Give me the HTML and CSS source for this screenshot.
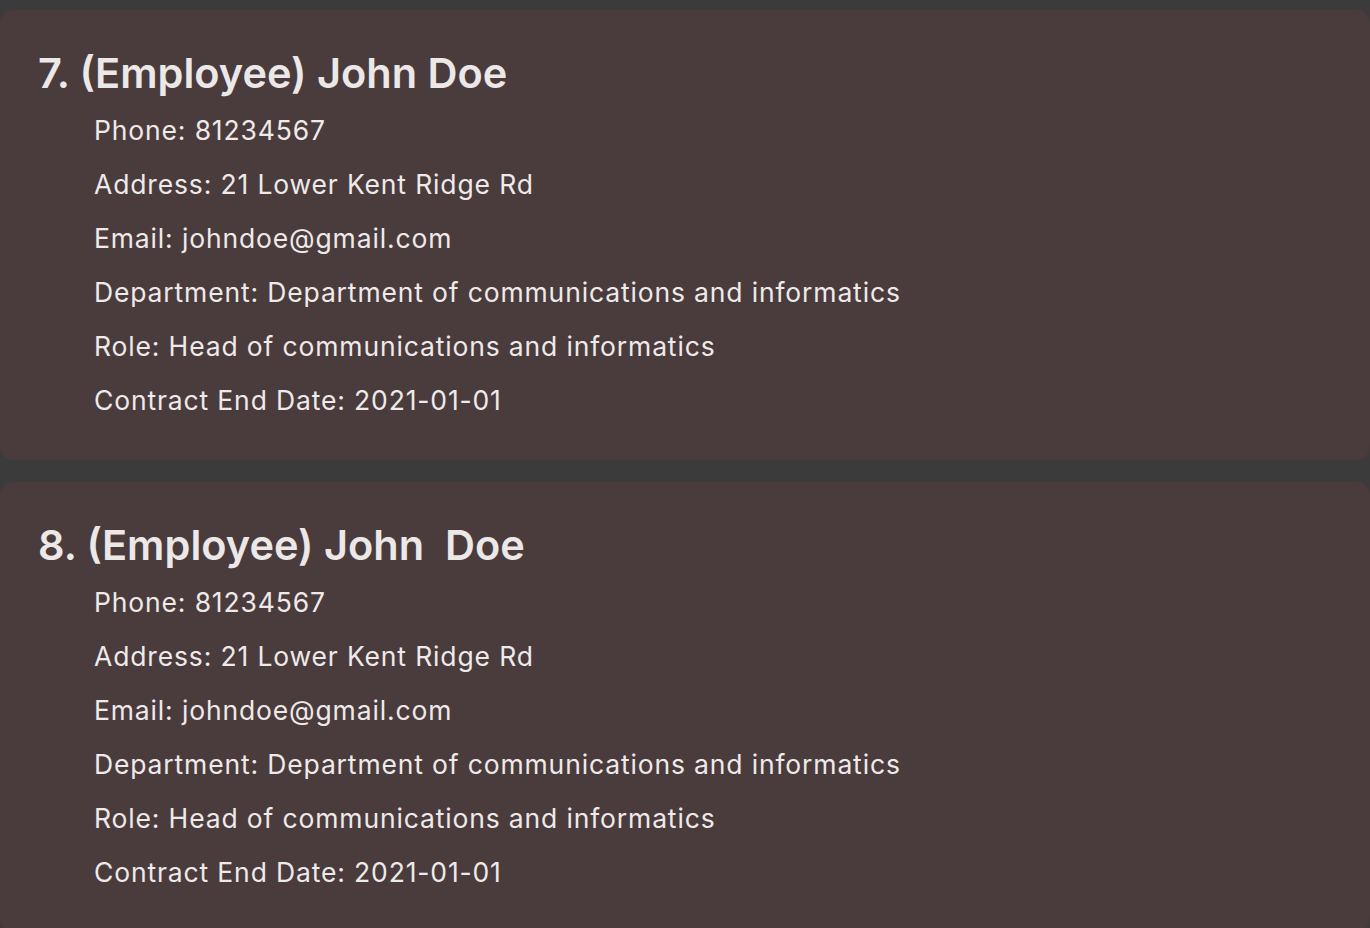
FILE: index.html
```html
<!DOCTYPE html>
<html>
<head>
<meta charset="utf-8">
<link rel="stylesheet" href="styles.css">
</head>
<body>
<div class="list">
  <div class="card">
    <div class="name">7. (Employee) John Doe</div>
    <div class="fields">
      <div class="field">Phone: 81234567</div>
      <div class="field">Address: 21 Lower Kent Ridge Rd</div>
      <div class="field">Email: johndoe@gmail.com</div>
      <div class="field">Department: Department of communications and informatics</div>
      <div class="field">Role: Head of communications and informatics</div>
      <div class="field">Contract End Date: 2021-01-01</div>
    </div>
  </div>
  <div class="card">
    <div class="name">8. (Employee) John  Doe</div>
    <div class="fields">
      <div class="field">Phone: 81234567</div>
      <div class="field">Address: 21 Lower Kent Ridge Rd</div>
      <div class="field">Email: johndoe@gmail.com</div>
      <div class="field">Department: Department of communications and informatics</div>
      <div class="field">Role: Head of communications and informatics</div>
      <div class="field">Contract End Date: 2021-01-01</div>
    </div>
  </div>
</div>
</body>
</html>
```
FILE: styles.css
```css
html, body {
  margin: 0;
  padding: 0;
  background: #3b3b3b;
  overflow: hidden;
}
.list {
  display: flex;
  flex-direction: column;
  gap: 22px;
  padding-top: 10px;
}
.card {
  background: #4a3b3c;
  border-radius: 14px;
  height: 450px;
  box-sizing: border-box;
  padding: 38px 0 0 38px;
  font-family: Inter, "DejaVu Sans", sans-serif;
  color: #eeeaea;
}
.name {
  font-size: 41.5px;
  font-weight: 600;
  line-height: 50px;
  white-space: pre;
  color: #ece8e8;
}
.fields {
  margin-top: 5px;
  padding-left: 56px;
  display: flex;
  flex-direction: column;
}
.field {
  font-size: 26.5px;
  line-height: 54px;
  letter-spacing: 0.85px;
  white-space: pre;
}
```
